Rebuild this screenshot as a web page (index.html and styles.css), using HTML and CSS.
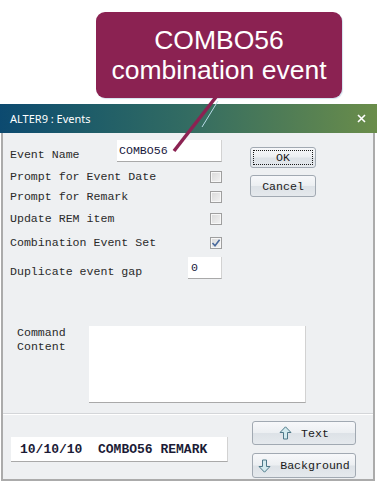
FILE: index.html
```html
<!DOCTYPE html>
<html lang="en">
<head>
  <meta charset="UTF-8">
  <meta name="viewport" content="width=device-width, initial-scale=1.0">
  <title>ALTER9 : Events</title>
  <link rel="stylesheet" href="styles.css">
</head>
<body>
  <!-- Callout -->
  <div class="callout">COMBO56<br>combination event</div>
  <svg class="pointer" width="377" height="160" viewBox="0 0 377 160">
    <line x1="218" y1="101" x2="202" y2="127" stroke="#b9dbe8" stroke-width="1" />
    <line x1="216" y1="97" x2="174" y2="151" stroke="#8b2252" stroke-width="3.5" />
  </svg>

  <div class="window">
    <div class="titlebar">
      <span class="title">ALTER9 : Events</span>
      <svg class="close" width="9" height="9" viewBox="0 0 9 9">
        <path d="M1 1 L8 8 M8 1 L1 8" stroke="#fff" stroke-width="1.6" />
      </svg>
    </div>

    <div class="window-body">
      <div class="main">
        <div class="form">
          <div class="row row-input">
            <span class="label">Event Name</span>
            <div class="field field-name">COMBO56</div>
          </div>
          <div class="row">
            <span class="label">Prompt for Event Date</span>
            <span class="check"></span>
          </div>
          <div class="row">
            <span class="label">Prompt for Remark</span>
            <span class="check"></span>
          </div>
          <div class="row">
            <span class="label">Update REM item</span>
            <span class="check"></span>
          </div>
          <div class="row">
            <span class="label">Combination Event Set</span>
            <span class="check">
              <svg width="10" height="10" viewBox="0 0 10 10">
                <path d="M1.5 5 L4 7.8 L8.6 1.8" fill="none" stroke="#4a6a9c" stroke-width="1.6" />
              </svg>
            </span>
          </div>
          <div class="row row-input">
            <span class="label">Duplicate event gap</span>
            <div class="field field-gap">0</div>
          </div>
        </div>

        <div class="actions">
          <button class="btn btn-ok"><span class="focus">OK</span></button>
          <button class="btn btn-cancel">Cancel</button>
        </div>
      </div>

      <div class="command">
        <span class="label command-label">Command<br>Content</span>
        <div class="field command-box"></div>
      </div>

      <!-- Colour preview -->
      <div class="preview-panel">
        <div class="field preview">10/10/10  COMBO56 REMARK</div>
        <div class="colour-buttons">
          <button class="btn btn-colour">
            <svg width="13" height="14" viewBox="0 0 13 14">
              <path d="M6.5 0.8 L12 6.5 L8.5 6.5 L8.5 13 L4.5 13 L4.5 6.5 L1 6.5 Z" fill="#d3eaee" stroke="#4d7888" stroke-width="1" />
            </svg>
            Text
          </button>
          <button class="btn btn-colour">
            <svg width="13" height="14" viewBox="0 0 13 14">
              <path d="M6.5 13.2 L12 7.5 L8.5 7.5 L8.5 1 L4.5 1 L4.5 7.5 L1 7.5 Z" fill="#d3eaee" stroke="#4d7888" stroke-width="1" />
            </svg>
            Background
          </button>
        </div>
      </div>
    </div>
  </div>
</body>
</html>
```

FILE: styles.css
```css
* {
  margin: 0;
  padding: 0;
  box-sizing: border-box;
}

body {
  width: 377px;
  height: 483px;
  position: relative;
  overflow: hidden;
  background-color: #ffffff;
  font-family: "Liberation Mono", "Courier New", monospace;
  font-size: 11.6px;
  color: #2a2a2a;
}

/* Callout */
.callout {
  width: 246px;
  height: 86px;
  margin: 12px 0 6px 96px;
  padding-top: 13px;
  border-radius: 9px;
  background-color: #8b2252;
  box-shadow: 1px 1px 1px #d3e2ee;
  color: #ffffff;
  font-family: "Liberation Sans", Arial, sans-serif;
  font-size: 26.5px;
  line-height: 30px;
  text-align: center;
}

.pointer {
  position: absolute;
  top: 0;
  left: 0;
  z-index: 2;
  pointer-events: none;
}

/* Window */
.titlebar {
  height: 29px;
  display: flex;
  align-items: center;
  justify-content: space-between;
  padding: 0 10px 1px 10px;
  background: linear-gradient(90deg, #0c4a70 0%, #1f5d68 25%, #336c62 50%, #4f7c56 75%, #6a8d4a 100%);
  color: #ffffff;
  font-family: "Noto Sans", "Open Sans", sans-serif;
  font-size: 11px;
}

.close {
  margin-right: 1px;
}

.window-body {
  height: 348px;
  margin: 0 2px 0 1px;
  border: 2px solid #ababab;
  border-top: none;
  background-color: #eef0f2;
}

.main {
  display: flex;
  padding: 7px 0 0 7px;
}

.form {
  width: 212px;
  display: grid;
  grid-template-rows: 31px 20px 22px 24px 20px 22px;
}

.row {
  display: flex;
  justify-content: space-between;
  align-items: flex-start;
}

.label {
  line-height: 12px;
  white-space: nowrap;
}

.row-input .label {
  line-height: 14px;
  padding-top: 8px;
}

.field {
  background-color: #ffffff;
  border-right: 1px solid #d2d2d2;
  border-bottom: 1px solid #a9a9a9;
}

.field-name {
  width: 105px;
  height: 22px;
  padding: 3px 0 0 2px;
  line-height: 16px;
  color: #18183c;
}

.field-gap {
  width: 34px;
  height: 22px;
  padding: 3px 0 0 3px;
  line-height: 16px;
  color: #18183c;
}

.check {
  width: 12px;
  height: 12px;
  display: flex;
  align-items: center;
  justify-content: center;
  border: 1px solid #9f9f9f;
  background: linear-gradient(135deg, #d9d9d9, #f3f3f3);
  box-shadow: inset 0 0 0 1px #f7f7f7;
}

.actions {
  display: flex;
  flex-direction: column;
  gap: 7px;
  margin-left: 28px;
  padding-top: 7px;
}

.btn {
  display: flex;
  align-items: center;
  justify-content: center;
  font-family: "Liberation Mono", "Courier New", monospace;
  font-size: 11.6px;
  color: #1a1a1a;
  border: 1px solid #a1a9b2;
  border-radius: 3px;
  background: linear-gradient(#f7f8fa 0%, #eceff2 48%, #dde2e7 52%, #e5e9ed 100%);
}

.btn-ok {
  width: 66px;
  height: 21px;
  padding: 2px;
}

.btn-ok .focus {
  width: 100%;
  height: 100%;
  display: flex;
  align-items: center;
  justify-content: center;
  border: 1px dotted #1a1a1a;
}

.btn-cancel {
  width: 66px;
  height: 22px;
}

/* Command content */
.command {
  display: flex;
  margin-top: 47px;
  padding-left: 14px;
}

.command-label {
  width: 72px;
  line-height: 14px;
}

.command-box {
  width: 217px;
  height: 77px;
}

/* Preview panel */
.preview-panel {
  display: flex;
  height: 66px;
  margin-top: 10px;
  padding: 7px 0 0 8px;
  border-top: 1px solid #d4d6d9;
  box-shadow: inset 0 1px 0 #ffffff;
}

.preview {
  width: 217px;
  height: 25px;
  margin-top: 16px;
  padding: 4px 0 0 9px;
  font-size: 13px;
  font-weight: bold;
  line-height: 17px;
  color: #1b1b36;
  white-space: pre;
}

.colour-buttons {
  display: flex;
  flex-direction: column;
  gap: 8px;
  margin-left: 24px;
}

.btn-colour {
  width: 104px;
  height: 24px;
  gap: 9px;
}

.btn-colour + .btn-colour {
  height: 25px;
}
```
